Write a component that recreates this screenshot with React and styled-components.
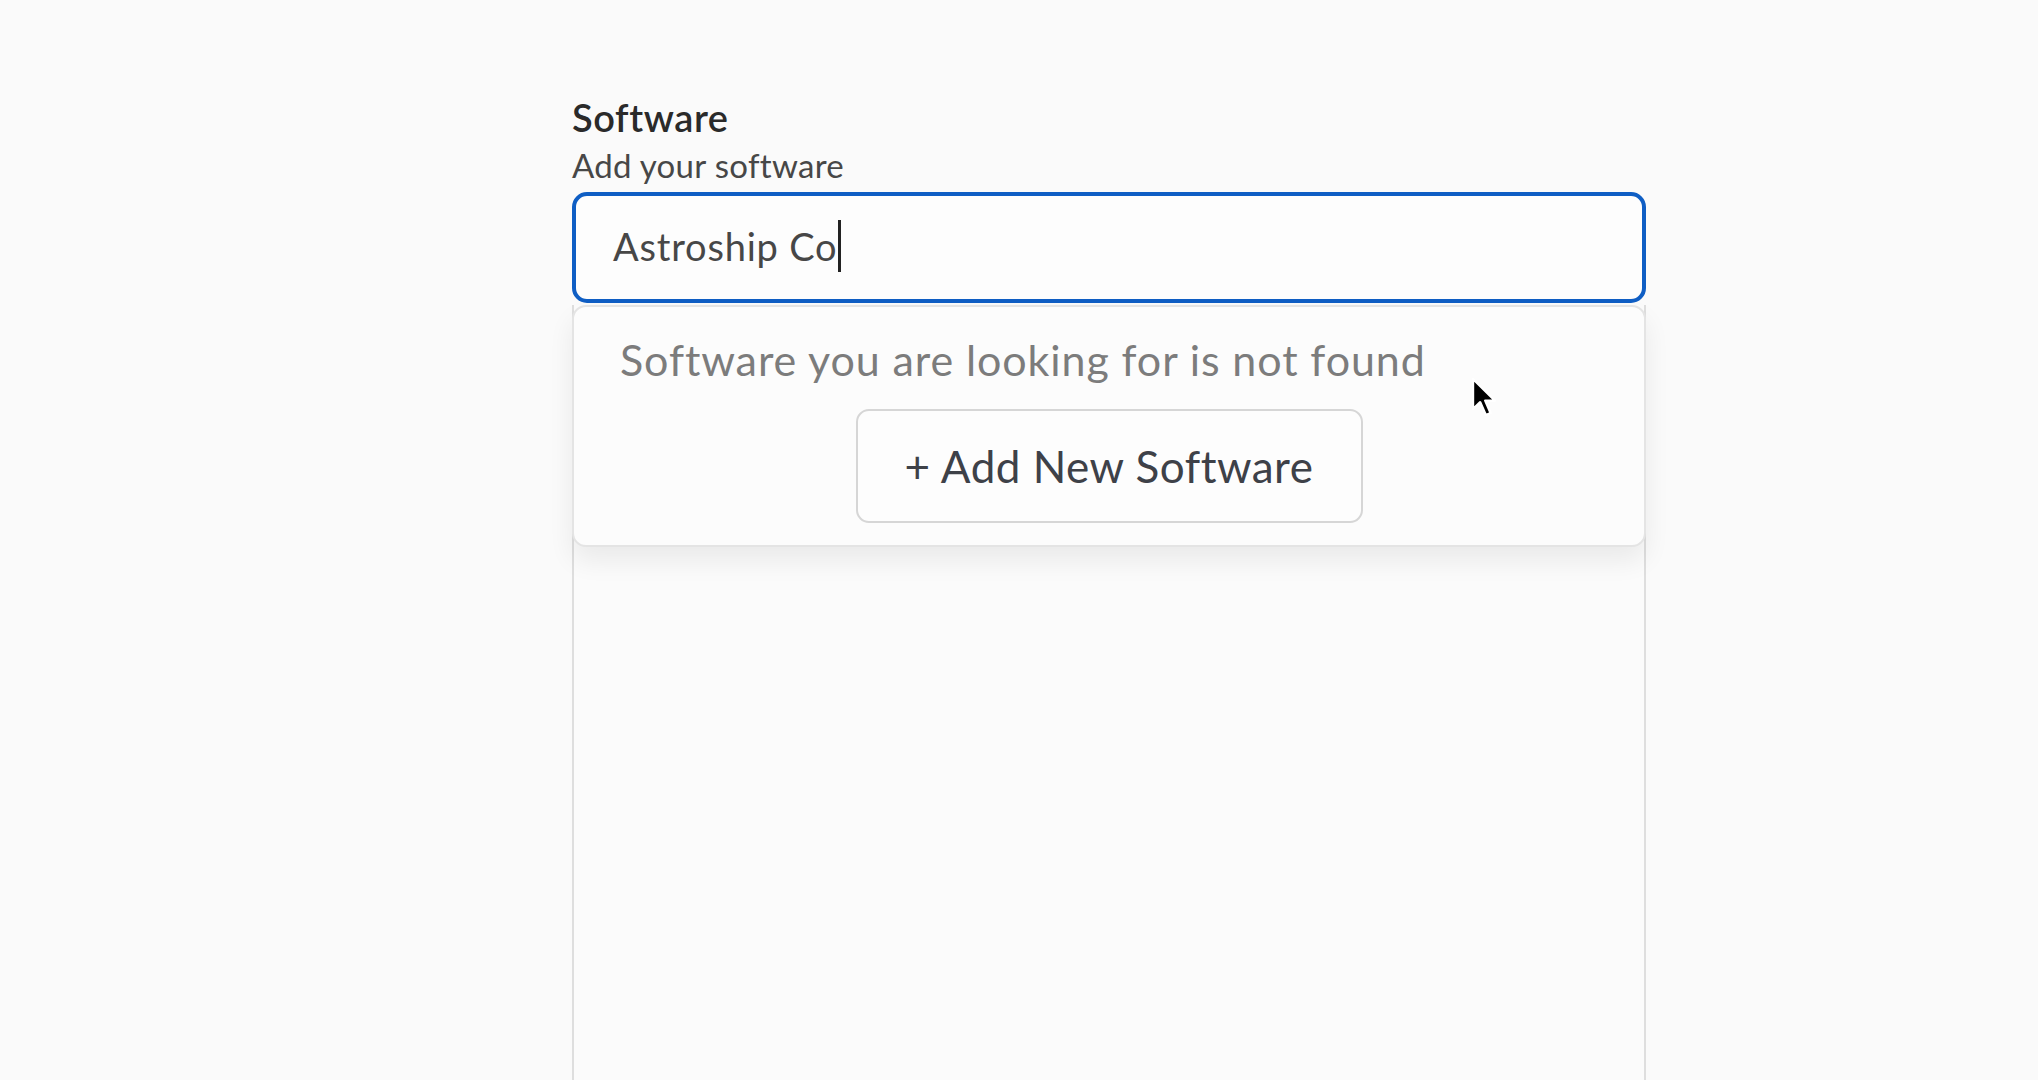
import styled, { createGlobalStyle } from "styled-components";

const GlobalStyle = createGlobalStyle`
  body {
    margin: 0;
    background-color: #fafafa;
    font-family: Lato, "Open Sans", sans-serif;
  }
`;

const Page = styled.div`
  min-height: 100vh;
  padding: 95px 0 0 572px;
  box-sizing: border-box;
  overflow: hidden;
`;

const Field = styled.div`
  width: 1074px;
  display: flex;
  flex-direction: column;
`;

const Label = styled.h3`
  margin: 0;
  font-size: 38px;
  font-weight: 600;
  letter-spacing: 0.6px;
  color: #2a2a2a;
  line-height: 44px;
`;

const Hint = styled.p`
  margin: 5px 0 6px;
  font-size: 33px;
  letter-spacing: 0.3px;
  color: #474747;
  line-height: 42px;
`;

const Combo = styled.div`
  position: relative;
`;

const InputBox = styled.div`
  height: 111px;
  box-sizing: border-box;
  border: 4px solid #0f5ec4;
  border-radius: 15px;
  background-color: #fdfdfd;
  padding: 0 0 4px 37px;
  display: flex;
  align-items: center;
  font-size: 38px;
  letter-spacing: 0.8px;
  color: #474747;
`;

const Caret = styled.span`
  display: inline-block;
  width: 3px;
  height: 52px;
  background-color: #222;
  margin-left: 1px;
`;

const ListArea = styled.div`
  margin-top: 2px;
  height: 800px;
  border-left: 2px solid #dedede;
  border-right: 2px solid #dedede;
  background-color: #fbfbfb;
`;

const Dropdown = styled.div`
  position: absolute;
  top: 113px;
  left: 0;
  right: 0;
  height: 242px;
  box-sizing: border-box;
  padding: 25px 0 0 46px;
  border: 2px solid #e4e4e4;
  border-radius: 14px;
  background-color: #fcfcfc;
  box-shadow: 0 14px 26px rgba(0, 0, 0, 0.07);
  display: flex;
  flex-direction: column;
`;

const NotFound = styled.p`
  margin: 0;
  font-size: 43px;
  letter-spacing: 0.9px;
  color: #7c7c7c;
  line-height: 56px;
`;

const AddButton = styled.button`
  align-self: center;
  margin: 21px 0 0 -46px;
  width: 507px;
  height: 114px;
  border: 2px solid #d6d6d6;
  border-radius: 13px;
  background-color: #fdfdfd;
  font-family: Lato, "Open Sans", sans-serif;
  font-size: 44px;
  letter-spacing: 0.5px;
  color: #3e4148;
  cursor: pointer;
`;

const Pointer = styled.svg`
  position: absolute;
  left: 897px;
  top: 70px;
`;

const App = () => {
  return (
    <Page>
      <GlobalStyle />
      <Field>
        <Label>Software</Label>
        <Hint>Add your software</Hint>
        <Combo>
          <InputBox>
            Astroship Co
            <Caret />
          </InputBox>
          <ListArea />
          <Dropdown>
            <NotFound>Software you are looking for is not found</NotFound>
            <AddButton>+ Add New Software</AddButton>
            <Pointer width="30" height="42" viewBox="0 0 15 21">
              <path
                d="M1 1 L1 16 L4.6 12.6 L7.4 19 L9.8 18 L7.1 11.8 L12 11.8 Z"
                fill="#000"
                stroke="#fff"
                strokeWidth="1.2"
                strokeLinejoin="round"
              />
            </Pointer>
          </Dropdown>
        </Combo>
      </Field>
    </Page>
  );
};

export default App;
